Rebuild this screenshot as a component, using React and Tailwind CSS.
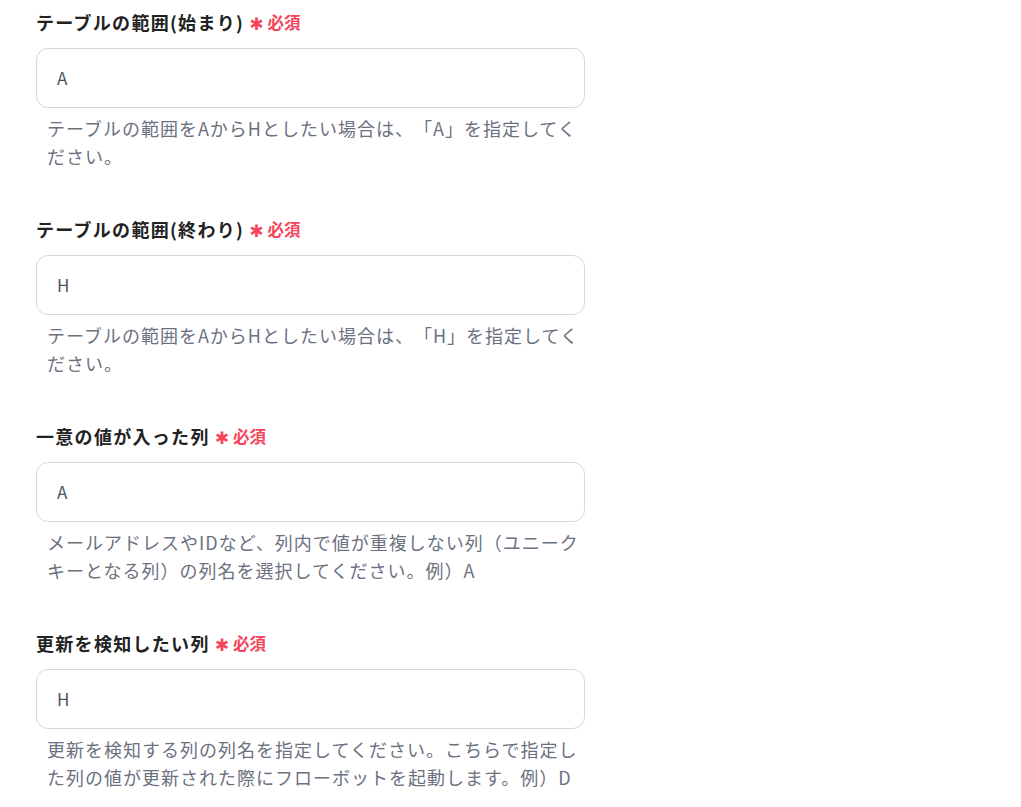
import React from "react";

const fields = [
  {
    label: "テーブルの範囲(始まり)",
    value: "A",
    help: "テーブルの範囲をAからHとしたい場合は、「A」を指定してください。",
  },
  {
    label: "テーブルの範囲(終わり)",
    value: "H",
    help: "テーブルの範囲をAからHとしたい場合は、「H」を指定してください。",
  },
  {
    label: "一意の値が入った列",
    value: "A",
    help: "メールアドレスやIDなど、列内で値が重複しない列（ユニークキーとなる列）の列名を選択してください。例）A",
  },
  {
    label: "更新を検知したい列",
    value: "H",
    help: "更新を検知する列の列名を指定してください。こちらで指定した列の値が更新された際にフローボットを起動します。例）D",
  },
];

function Field({ label, value, help }) {
  return (
    <div className="flex flex-col">
      <div className="flex items-center h-[44px]">
        <span className="text-[18px] font-bold text-[#222222] tracking-[1.3px]">{label}</span>
        <span
          className="ml-[5px] text-[17px] text-[#f5455c] leading-none mt-[4px]"
          style={{ fontFamily: '"DejaVu Sans", sans-serif' }}
        >
          ✱
        </span>
        <span className="ml-[4px] text-[16.5px] font-bold text-[#f5455c]">必須</span>
      </div>
      <div className="mt-[4px] h-[60px] w-[549px] rounded-[12px] border border-[#d4d7de] bg-white flex items-center px-[20px] text-[17px] text-[#50545e]">
        {value}
      </div>
      <p className="w-[550px] pl-[11px] pt-[6px] text-[18px] leading-[28px] text-[#6b717f] tracking-[1px] [text-spacing-trim:space-all]">
        {help}
      </p>
    </div>
  );
}

export default function App() {
  return (
    <div
      className="min-h-screen bg-white pl-[36px] pt-0"
      style={{ fontFamily: '"Noto Sans CJK JP", "Noto Sans", sans-serif' }}
    >
      <div className="flex flex-col gap-[37px]">
        {fields.map((f) => (
          <Field key={f.label} {...f} />
        ))}
      </div>
    </div>
  );
}
